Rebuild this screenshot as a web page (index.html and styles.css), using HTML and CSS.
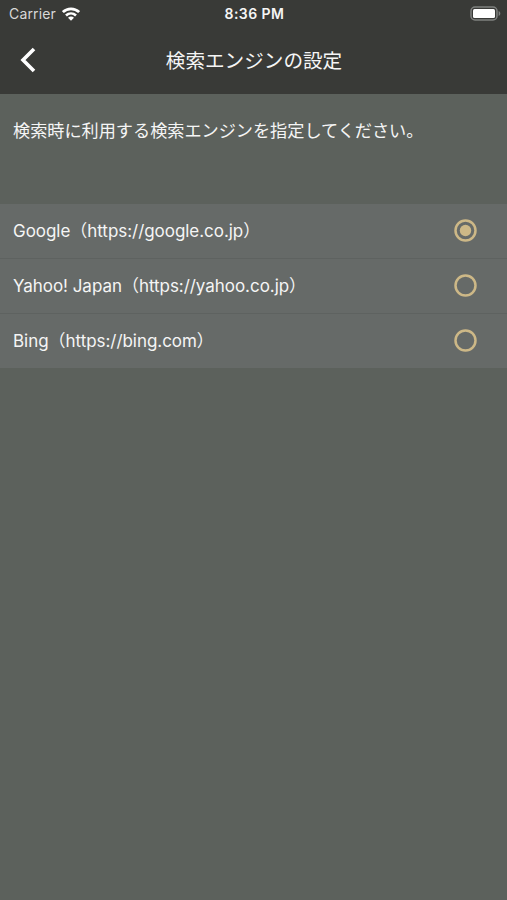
FILE: index.html
```html
<!DOCTYPE html>
<html lang="ja">
<head>
<meta charset="utf-8">
<meta name="viewport" content="width=device-width, initial-scale=1">
<title>検索エンジンの設定</title>
<link rel="stylesheet" href="styles.css">
</head>
<body>
<header class="header">
  <div class="status">
    <div class="status-left">
      <span class="carrier">Carrier</span>
      <svg class="wifi" width="18" height="14" viewBox="0 0 18 14" fill="none" stroke="#fff" stroke-width="2.7">
        <path d="M.9 5.1C5.4.7 12.6.7 17.1 5.1"/>
        <path d="M4 8.5c2.9-2.7 7.1-2.7 10 0"/>
        <path d="M9 13.7 6 10.7c1.8-1.5 4.2-1.5 6 0z" fill="#fff" stroke="none"/>
      </svg>
    </div>
    <span class="time">8:36 PM</span>
    <svg class="battery" width="31" height="15" viewBox="0 0 31 15">
      <rect x="1" y="1" width="26" height="13" rx="4" fill="none" stroke="#7f817f" stroke-width="1.5"/>
      <rect x="3" y="3" width="22" height="9" rx="1.5" fill="#fff"/>
      <path d="M28.6 5v5c2.3-.9 2.3-4.1 0-5z" fill="#7f817f"/>
    </svg>
  </div>
  <div class="nav">
    <button class="back" aria-label="戻る">
      <svg width="16" height="26" viewBox="0 0 16 26" fill="none" stroke="#fff" stroke-width="3.6"><path d="M14 2 3 13l11 11"/></svg>
    </button>
    <h1 class="title">検索エンジンの設定</h1>
  </div>
</header>
<main>
  <p class="intro">検索時に利用する検索エンジンを指定してください。</p>
  <ul class="engines">
    <li class="engine">
      <span class="name">Google（https://google.co.jp）</span>
      <svg class="radio" viewBox="0 0 23 23"><circle class="ring" cx="11.5" cy="11.5" r="10"/><circle class="dot" cx="11.5" cy="11.5" r="5.7"/></svg>
    </li>
    <li class="engine">
      <span class="name">Yahoo! Japan（https://yahoo.co.jp）</span>
      <svg class="radio" viewBox="0 0 23 23"><circle class="ring" cx="11.5" cy="11.5" r="10"/></svg>
    </li>
    <li class="engine">
      <span class="name">Bing（https://bing.com）</span>
      <svg class="radio" viewBox="0 0 23 23"><circle class="ring" cx="11.5" cy="11.5" r="10"/></svg>
    </li>
  </ul>
</main>
</body>
</html>
```
FILE: styles.css
```css
* { box-sizing: border-box; }
body {
  margin: 0;
  min-height: 900px;
  background: #5c615c;
  color: #f5f5f5;
  font-family: Inter, "Noto Sans CJK JP", sans-serif;
}
.header {
  height: 94px;
  background: #393a37;
}
.status {
  display: grid;
  grid-template-columns: 1fr auto 1fr;
  align-items: center;
  height: 27px;
  padding: 0 7px 0 9px;
}
.status-left {
  display: flex;
  align-items: center;
  gap: 6px;
}
.carrier {
  font-size: 14px;
  letter-spacing: .15px;
  color: #d8d8d7;
}
.time {
  font-size: 14px;
  font-weight: 600;
  letter-spacing: .45px;
}
.battery {
  justify-self: end;
  margin-right: -1px;
}
.nav {
  display: grid;
  grid-template-columns: 56px 1fr 56px;
  align-items: center;
  height: 66px;
}
.back {
  display: flex;
  padding: 0 0 0 20px;
  border: 0;
  background: none;
}
.title {
  margin: 0;
  padding: 0 0 2px 1px;
  font-size: 19.6px;
  font-weight: 400;
  text-align: center;
  white-space: nowrap;
}
.intro {
  height: 110px;
  margin: 0;
  padding: 24px 13px 0;
  font-size: 17.15px;
  line-height: 25px;
  white-space: nowrap;
}
.engines {
  margin: 0;
  padding: 0;
  list-style: none;
}
.engine {
  display: flex;
  align-items: center;
  justify-content: space-between;
  height: 55px;
  padding: 0 30px 1px 13px;
  background: #666a68;
  border-bottom: 1px solid #5e6260;
}
.engine:last-child {
  height: 54px;
  border-bottom: 0;
}
.name {
  padding-bottom: 3px;
  font-size: 17px;
  letter-spacing: -.04px;
  white-space: nowrap;
}
.radio {
  width: 23px;
  height: 23px;
}
.ring {
  fill: none;
  stroke: #cdb887;
  stroke-width: 2.5;
}
.dot { fill: #cdb887; }
```
